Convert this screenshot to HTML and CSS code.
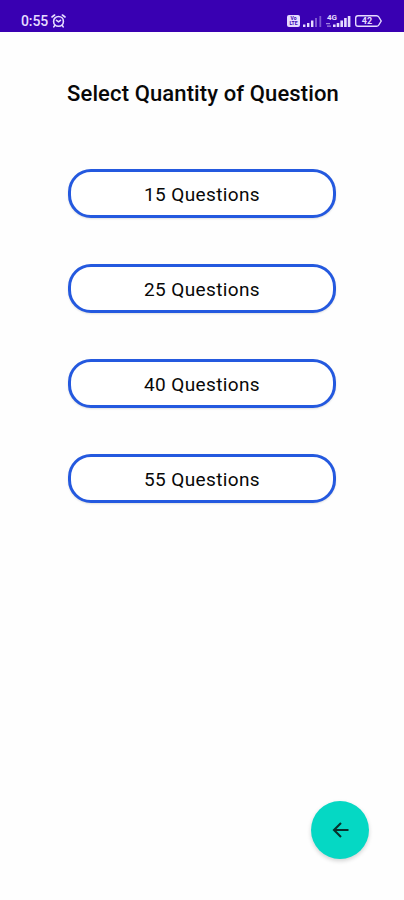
FILE: index.html
```html
<!DOCTYPE html>
<html lang="en">
<head>
<meta charset="utf-8">
<title>Select Quantity of Question</title>
<link rel="stylesheet" href="styles.css">
</head>
<body>
<div class="screen">
  <header class="status">
    <span class="clock">0:55</span>
    <svg class="alarm" width="15" height="14" viewBox="0 0 15 14" fill="none" stroke="currentColor" stroke-width="1.6" stroke-linecap="round">
      <circle cx="7.5" cy="7.4" r="4.9"/><path d="M1 3 3.6 1M14 3 11.4 1M3.9 11.2 2.8 12.9M11.1 11.2l1.1 1.7M5.5 6.3l2 1.5 2-1.5"/>
    </svg>
    <div class="indicators">
      <span class="volte"><span>Vo</span><span>LTE</span></span>
      <svg class="signal" width="19" height="12" viewBox="0 0 19 12" fill="currentColor">
        <path d="M0 9.5h2.4V12H0zM4 8h2.4v4H4zM8 5.5h2.4V12H8z"/><path opacity=".4" d="M12 3h2v9h-2zM16.4 1h1.8v11h-1.8z"/>
      </svg>
      <span class="network"><span class="gen">4G</span>
        <svg width="25" height="12" viewBox="0 0 25 12" fill="currentColor">
          <path opacity=".6" d="M0 8h4v1.3H0zM1 10.5h4v1.3H1z"/><path d="M7 9.5h2.6V12H7zM10.7 8h2.6v4h-2.6zM14.4 5.5H17V12h-2.6zM18.1 3h2.6v9h-2.6zM21.8 1h2.6v11h-2.6z"/>
        </svg>
      </span>
      <span class="battery">
        <svg width="27" height="12" viewBox="0 0 27 12" fill="none" stroke="currentColor" stroke-width="1.4"><path d="M3 .7h18.5Q23 .7 23.8 2l2.4 4-2.4 4q-.8 1.3-2.3 1.3H3Q.7 11.3.7 9V3Q.7.7 3 .7Z"/></svg>
        <span class="level">42</span>
      </span>
    </div>
  </header>
  <main class="content">
    <h1>Select Quantity of Question</h1>
    <div class="options">
      <button class="option">15 Questions</button>
      <button class="option">25 Questions</button>
      <button class="option">40 Questions</button>
      <button class="option">55 Questions</button>
    </div>
  </main>
  <footer class="footer">
    <button class="back" aria-label="Back">
      <svg width="17" height="16" viewBox="0 0 17 16" fill="none" stroke="#07302c" stroke-width="2.1"><path d="M16.5 8H2.5M9 1 2 8l7 7"/></svg>
    </button>
  </footer>
</div>
</body>
</html>
```
FILE: styles.css
```css
* { box-sizing: border-box; }
body { margin: 0; background: #fefefe; font-family: Roboto, sans-serif; color: #080808; }
.screen { width: 404px; height: 900px; display: flex; flex-direction: column; }
.status { height: 32px; flex: none; background: #3900b2; color: #e6dcff; display: flex; align-items: flex-start; padding: 14px 22px 0 21px; }
.clock { font-size: 14px; line-height: 15px; font-weight: 500; width: 30px; white-space: nowrap; letter-spacing: -.1px; }
.indicators { margin-left: auto; display: flex; align-items: flex-start; padding-top: 1px; }
.volte { width: 13px; height: 12px; border-radius: 2px; background: #e6dcff; color: #3900b2; font-size: 5px; line-height: 5px; font-weight: 700; display: flex; flex-direction: column; align-items: center; justify-content: center; margin-right: 3px; }
.signal { margin-right: 4px; }
.network { position: relative; height: 12px; margin-right: 4px; }
.network svg, .battery svg { display: block; }
.gen { position: absolute; left: 1px; top: -1px; font-size: 8px; line-height: 8px; font-weight: 700; }
.battery { position: relative; }
.level { position: absolute; left: 0; top: 0; width: 24px; text-align: center; font-size: 9px; line-height: 12px; font-weight: 700; }
.content { flex: 1; display: flex; flex-direction: column; align-items: center; padding-top: 48px; }
h1 { margin: 0 0 61px; font-size: 22px; line-height: 28px; font-weight: 500; letter-spacing: .12px; white-space: nowrap; padding-left: 2px; }
.options { display: flex; flex-direction: column; gap: 46px; }
.option { width: 268px; height: 49px; padding: 2px 0 0; border: 3px solid #2459df; border-radius: 23px; background: #fff; font: 400 19px/24px Roboto, sans-serif; letter-spacing: .38px; color: #080808; box-shadow: 0 1px 2px rgba(0, 0, 0, .12); }
.footer { display: flex; justify-content: flex-end; padding: 0 35px 41px 0; }
.back { width: 58px; height: 58px; border: 0; border-radius: 50%; background: #05d8c4; display: flex; align-items: center; justify-content: center; padding: 0; box-shadow: 0 2px 4px rgba(0, 0, 0, .18); }
```
